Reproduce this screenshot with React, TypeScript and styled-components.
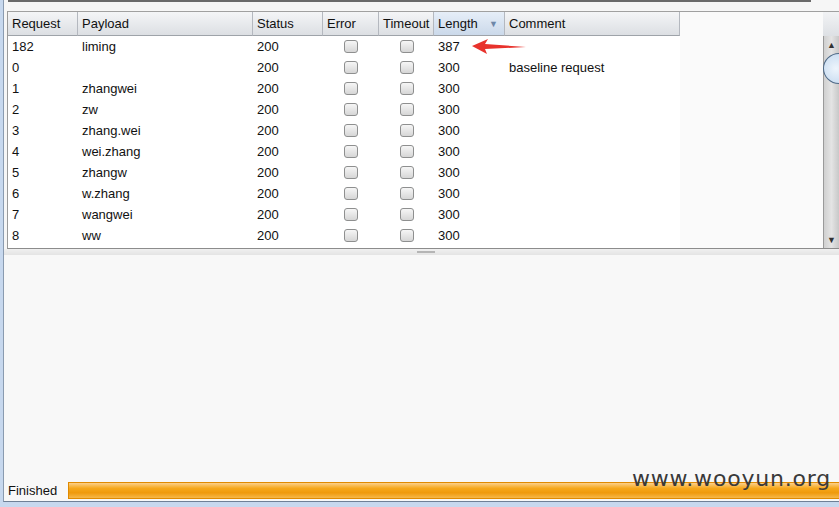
import styled, { createGlobalStyle } from "styled-components";

const GlobalStyle = createGlobalStyle`
  html, body {
    margin: 0;
    padding: 0;
    background: #f6f6f6;
  }
  body {
    font-family: "Liberation Sans", Arial, sans-serif;
    font-size: 13px;
    color: #111;
  }
`;

type Row = {
  req: string;
  payload: string;
  status: string;
  length: string;
  comment?: string;
};

const rows: Row[] = [
  { req: "182", payload: "liming", status: "200", length: "387" },
  { req: "0", payload: "", status: "200", length: "300", comment: "baseline request" },
  { req: "1", payload: "zhangwei", status: "200", length: "300" },
  { req: "2", payload: "zw", status: "200", length: "300" },
  { req: "3", payload: "zhang.wei", status: "200", length: "300" },
  { req: "4", payload: "wei.zhang", status: "200", length: "300" },
  { req: "5", payload: "zhangw", status: "200", length: "300" },
  { req: "6", payload: "w.zhang", status: "200", length: "300" },
  { req: "7", payload: "wangwei", status: "200", length: "300" },
  { req: "8", payload: "ww", status: "200", length: "300" },
];

const columns = "70px 175px 70px 56px 55px 71px 175px";

const Window = styled.div`
  position: relative;
  width: 839px;
  height: 507px;
  display: flex;
  flex-direction: column;
  box-sizing: border-box;
  border-left: 3px solid #c7d8ee;
  border-bottom: 5px solid #c7d8ee;
  overflow: hidden;
  background: #f6f6f6;
`;

const Inner = styled.div`
  flex: 1;
  display: flex;
  flex-direction: column;
  border-left: 1px solid #8a9bb0;
  border-bottom: 1px solid #6f8096;
  min-height: 0;
`;

const TopStrip = styled.div`
  height: 11px;
  flex-shrink: 0;
  box-sizing: border-box;
  margin-left: 4px;
  width: 803px;
  border-top: 2px solid #6a6a6a;
`;

const TablePanel = styled.div`
  height: 238px;
  flex-shrink: 0;
  margin-left: 3px;
  display: flex;
  box-sizing: border-box;
  border-left: 1px solid #9a9a9a;
  border-top: 1px solid #a0a0a0;
  border-bottom: 1px solid #8c8c8c;
  background: #fafafa;
`;

const TableArea = styled.div`
  flex: 1;
  display: flex;
  flex-direction: column;
`;

const HeaderRow = styled.div`
  display: grid;
  grid-template-columns: ${columns};
  height: 24px;
  width: 672px;
  flex-shrink: 0;
`;

const HeaderCell = styled.div<{ $active?: boolean }>`
  display: flex;
  align-items: center;
  justify-content: space-between;
  padding: 0 6px 0 4px;
  box-sizing: border-box;
  border-right: 1px solid #b4b8bf;
  border-bottom: 1px solid #9ea3a9;
  background: ${(p) =>
    p.$active
      ? "linear-gradient(#e6eef8, #cbd9ea)"
      : "linear-gradient(#f4f5f7, #dcdfe3)"};
  white-space: nowrap;
`;

const SortMark = styled.span`
  color: #6d87a8;
  font-size: 9px;
`;

const Body = styled.div`
  width: 672px;
  flex: 1;
  background: #fff;
  display: flex;
  flex-direction: column;
`;

const DataRow = styled.div`
  display: grid;
  grid-template-columns: ${columns};
  height: 21px;
  align-items: center;
`;

const Cell = styled.div<{ $center?: boolean }>`
  padding-left: ${(p) => (p.$center ? "0" : "4px")};
  display: flex;
  justify-content: ${(p) => (p.$center ? "center" : "flex-start")};
  white-space: nowrap;
`;

const Check = styled.span`
  display: inline-block;
  width: 14px;
  height: 13px;
  box-sizing: border-box;
  border: 1px solid #8e8f8f;
  border-radius: 3px;
  background: linear-gradient(#f6f6f6, #d6d6d6);
`;

const Scrollbar = styled.div`
  width: 16px;
  display: flex;
  flex-direction: column;
`;

const ScrollCorner = styled.div`
  height: 24px;
  background: linear-gradient(#f2f3f5, #dde0e4);
`;

const ScrollTrack = styled.div`
  flex: 1;
  position: relative;
  display: flex;
  flex-direction: column;
  align-items: center;
  justify-content: space-between;
  padding: 2px 0 1px;
  background: linear-gradient(90deg, #d0d0d0, #e4e4e4 50%, #c8c8c8);
  border-left: 1px solid #9a9a9a;
`;

const ScrollArrow = styled.div`
  font-size: 9px;
  color: #333;
  height: 14px;
  line-height: 14px;
`;

const Thumb = styled.div`
  position: absolute;
  top: 17px;
  left: -1px;
  width: 30px;
  height: 29px;
  border-radius: 50%;
  border: 1px solid #4f6a88;
  background: radial-gradient(circle at 40% 50%, #eef5fc, #b9d2ec);
`;

const Splitter = styled.div`
  height: 6px;
  flex-shrink: 0;
  display: flex;
  justify-content: center;
  align-items: center;
  background: linear-gradient(#f0f0f0, #e4e4e4);
`;

const Grip = styled.div`
  width: 18px;
  height: 2px;
  background: #b5b5b5;
  margin-left: 8px;
`;

const LowerPane = styled.div`
  flex: 1;
  background: #f8f8f8;
`;

const StatusBar = styled.div`
  height: 24px;
  flex-shrink: 0;
  display: flex;
  align-items: center;
  gap: 11px;
  padding: 3px 0 0 4px;
  box-sizing: border-box;
  background: #f8f8f8;
`;

const StatusText = styled.span`
  font-size: 13px;
`;

const Progress = styled.div`
  flex: 1;
  height: 17px;
  box-sizing: border-box;
  border: 1px solid #e08a00;
  border-right: none;
  background: linear-gradient(#fcd08a, #f6a81c 35%, #ef9a0c 65%, #f6b84a);
`;

const Watermark = styled.div`
  position: absolute;
  right: 8px;
  bottom: 11px;
  font-family: "DejaVu Sans", "Liberation Sans", sans-serif;
  font-size: 22px;
  color: #3a3a3a;
  letter-spacing: 0.8px;
`;

const Arrow = styled.svg`
  position: absolute;
  left: 469px;
  top: 39px;
`;

export default function App() {
  return (
    <>
      <GlobalStyle />
      <Window>
        <Inner>
          <TopStrip />
          <TablePanel>
            <TableArea>
              <HeaderRow>
                <HeaderCell>Request</HeaderCell>
                <HeaderCell>Payload</HeaderCell>
                <HeaderCell>Status</HeaderCell>
                <HeaderCell>Error</HeaderCell>
                <HeaderCell>Timeout</HeaderCell>
                <HeaderCell $active>
                  Length <SortMark>▼</SortMark>
                </HeaderCell>
                <HeaderCell>Comment</HeaderCell>
              </HeaderRow>
              <Body>
                {rows.map((r) => (
                  <DataRow key={r.req}>
                    <Cell>{r.req}</Cell>
                    <Cell>{r.payload}</Cell>
                    <Cell>{r.status}</Cell>
                    <Cell $center>
                      <Check />
                    </Cell>
                    <Cell $center>
                      <Check />
                    </Cell>
                    <Cell>{r.length}</Cell>
                    <Cell>{r.comment}</Cell>
                  </DataRow>
                ))}
              </Body>
            </TableArea>
            <Scrollbar>
              <ScrollCorner />
              <ScrollTrack>
                <ScrollArrow>▲</ScrollArrow>
                <Thumb />
                <ScrollArrow>▼</ScrollArrow>
              </ScrollTrack>
            </Scrollbar>
          </TablePanel>
          <Splitter>
            <Grip />
          </Splitter>
          <LowerPane />
          <StatusBar>
            <StatusText>Finished</StatusText>
            <Progress />
          </StatusBar>
        </Inner>
        <Arrow width="56" height="16" viewBox="0 0 56 16">
          <path d="M0 7 L16 0 L13 5 L54 8 L13 10 L15 15 Z" fill="#e8322c" />
        </Arrow>
        <Watermark>www.wooyun.org</Watermark>
      </Window>
    </>
  );
}
